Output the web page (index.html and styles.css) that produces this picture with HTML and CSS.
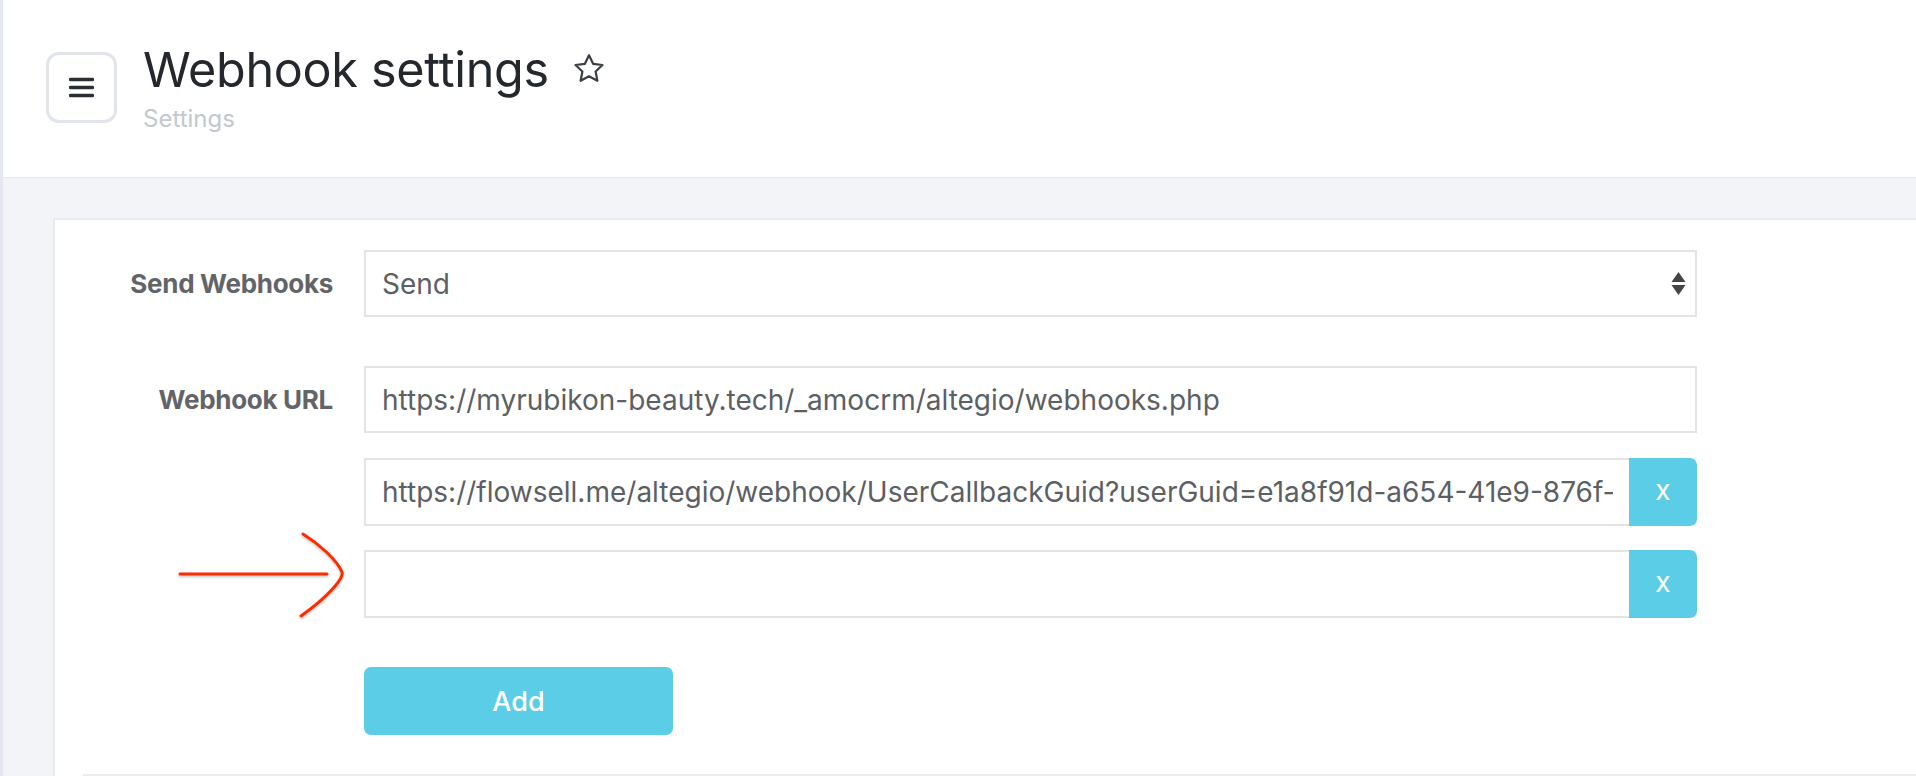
FILE: index.html
```html
<!DOCTYPE html>
<html lang="en">
<head>
<meta charset="utf-8">
<title>Webhook settings</title>
<link rel="stylesheet" href="styles.css">
</head>
<body>
<div class="app">
  <header class="header">
    <button class="menu-btn" type="button" aria-label="Menu">
      <svg width="25" height="21" viewBox="0 0 25 21"><path d="M1.5 2.5h22M1.5 10.5h22M1.5 18.5h22" stroke="#2a2f36" stroke-width="3.4" stroke-linecap="round"/></svg>
    </button>
    <div class="title-block">
      <div class="title-row">
        <h1 class="title">Webhook settings</h1>
        <svg class="star" width="32" height="31" viewBox="0 0 32 31"><path d="M16 2.2l4.1 8.6 9.4 1.2-6.9 6.5 1.8 9.3L16 23.3l-8.4 4.5 1.8-9.3-6.9-6.5 9.4-1.2z" fill="none" stroke="#3a3f45" stroke-width="2.2" stroke-linejoin="round"/></svg>
      </div>
      <div class="subtitle">Settings</div>
    </div>
  </header>
  <main class="content">
    <section class="card">
      <div class="form-row row-select">
        <label class="label">Send Webhooks</label>
        <div class="select">
          <span class="select-value">Send</span>
          <svg class="select-arrows" width="15" height="23" viewBox="0 0 15 23"><path d="M7.5 0L14.5 10H0.5z M0.5 13H14.5L7.5 23z" fill="#444"/></svg>
        </div>
      </div>
      <div class="form-row row-urls">
        <label class="label">Webhook URL</label>
        <div class="url-list">
          <div class="input first">https://myrubikon-beauty.tech/_amocrm/altegio/webhooks.php</div>
          <div class="input-group">
            <div class="input grouped"><span class="clip">https://flowsell.me/altegio/webhook/UserCallbackGuid?userGuid=e1a8f91d-a654-41e9-876f-</span></div>
            <button class="btn-x" type="button">x</button>
          </div>
          <div class="input-group">
            <div class="input grouped"></div>
            <button class="btn-x" type="button">x</button>
          </div>
          <button class="btn-add" type="button">Add</button>
        </div>
      </div>
      <div class="card-footer"></div>
    </section>
  </main>
  <svg class="annotation" width="200" height="100" viewBox="0 0 200 100">
    <defs><filter id="sh" x="-10%" y="-10%" width="120%" height="130%"><feDropShadow dx="0" dy="1.5" stdDeviation="1" flood-color="#000" flood-opacity="0.25"/></filter></defs>
    <g filter="url(#sh)" fill="none" stroke="#ff2a00" stroke-width="3" stroke-linecap="round">
      <path d="M37 54H184"/>
      <path d="M162 14C178 24 196 40 201 52C203 58 188 76 160 96" transform="translate(-2,0)"/>
    </g>
  </svg>
</div>
</body>
</html>
```
FILE: styles.css
```css
* { box-sizing: border-box; }
html, body { margin: 0; padding: 0; }
body {
  font-family: Inter, "Noto Sans", "Liberation Sans", sans-serif;
  background: #f3f4f8;
  width: 1916px;
  height: 776px;
  overflow: hidden;
}
.app {
  position: relative;
  height: 776px;
  overflow: hidden;
  border-left: 3px solid #e4e7ef;
}
.header {
  height: 178px;
  background: #fff;
  border-bottom: 1px solid #e6e8ee;
  display: flex;
  align-items: flex-start;
  padding: 52px 0 0 43px;
}
.menu-btn {
  width: 71px;
  height: 71px;
  border: 3px solid #e1e4eb;
  border-radius: 13px;
  background: #fff;
  display: flex;
  align-items: center;
  justify-content: center;
  padding: 0;
  flex: none;
}
.title-block { margin-left: 26px; margin-top: -6px; }
.title-row { display: flex; align-items: center; }
.title {
  margin: 0;
  font-weight: 400;
  font-size: 48.5px;
  line-height: 48px;
  color: #24282d;
  letter-spacing: -0.3px;
}
.star { margin-left: 24px; margin-top: -4px; }
.subtitle {
  margin-top: 12px;
  font-size: 24px;
  line-height: 26px;
  color: #c3c7d0;
}
.content { padding: 40px 0 0 50px; }
.card {
  width: 1900px;
  background: #fff;
  border: 2px solid #e8e9ed;
  border-right: none;
  padding: 30px 0 0 0;
  height: 600px;
}
.form-row {
  display: flex;
  align-items: flex-start;
}
.row-select { margin-bottom: 49px; }
.label {
  width: 278px;
  margin-right: 31px;
  text-align: right;
  font-weight: 700;
  font-size: 26px;
  color: #626468;
  flex: none;
  letter-spacing: -0.3px;
  line-height: 67px;
}
.select, .input {
  width: 1333px;
  height: 67px;
  border: 2px solid #e4e4e4;
  background: #fff;
  display: flex;
  align-items: center;
  padding: 0 16px;
  font-size: 28px;
  color: #5c5f63;
  white-space: nowrap;
  overflow: hidden;
}
.input.first { margin-bottom: 1px; }
.select { justify-content: space-between; padding-right: 9px; }
.select-arrows { flex: none; }
.url-list {
  display: flex;
  flex-direction: column;
  gap: 24px;
}
.input-group {
  display: flex;
  width: 1333px;
  height: 68px;
}
.input.grouped {
  width: auto;
  flex: 1;
  min-width: 0;
  height: 68px;
  border-right: none;
}
.clip { overflow: hidden; }
.btn-x {
  width: 68px;
  height: 68px;
  flex: none;
  border: none;
  background: #5bcde6;
  color: #fff;
  font-family: inherit;
  font-size: 28px;
  border-radius: 0 7px 7px 0;
  padding: 0 0 4px 0;
}
.btn-add {
  margin-top: 25px;
  width: 309px;
  height: 68px;
  border: none;
  border-radius: 7px;
  background: #5bcde6;
  color: #fff;
  font-family: inherit;
  font-size: 27px;
  font-weight: 500;
  padding: 0;
}
.card-footer {
  margin: 39px 0 0 28px;
  border-top: 3px solid #ececec;
}
.annotation {
  position: absolute;
  left: 140px;
  top: 520px;
  overflow: visible;
}
```
